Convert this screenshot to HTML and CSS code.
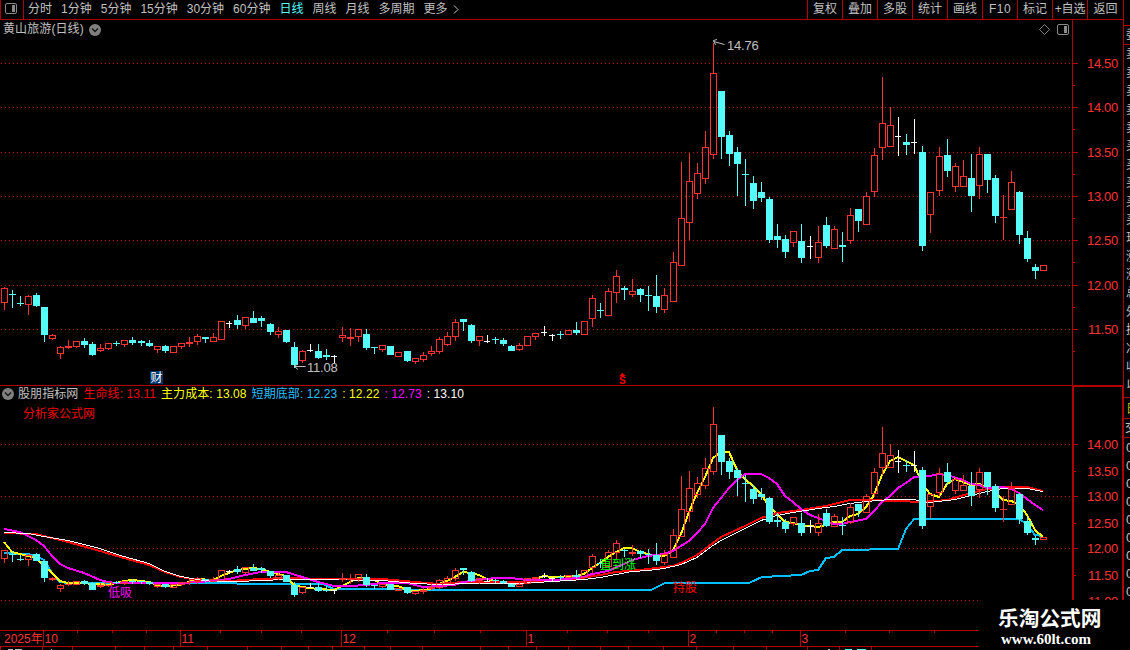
FILE: index.html
```html
<!DOCTYPE html>
<html lang="zh-CN">
<head>
    <meta charset="UTF-8">
    <title>黄山旅游(日线)</title>
    <link rel="stylesheet" href="styles.css">
</head>
<body>
    <div class="app">
        <div class="main">
            <div class="toolbar">
                <div class="layout-btn">
                    <svg width="12" height="11" viewBox="0 0 12 11"><rect x="0.5" y="0.5" width="11" height="10" rx="1.5" fill="none" stroke="#8a8a8a"/><rect x="7" y="2" width="3" height="7" fill="#8a8a8a"/></svg>
                </div>
                <div class="periods">
                    <span>分时</span><span>1分钟</span><span>5分钟</span><span>15分钟</span><span>30分钟</span><span>60分钟</span><span class="active">日线</span><span>周线</span><span>月线</span><span>多周期</span><span class="more">更多<svg width="6" height="9" viewBox="0 0 6 9"><path d="M1 0.5 L5 4.5 L1 8.5" fill="none" stroke="#c0c0c0"/></svg></span>
                </div>
                <div class="tools">
                    <span>复权</span><span>叠加</span><span>多股</span><span>统计</span><span>画线</span><span class="info">F10</span><span>标记</span><span class="add">+自选</span><span class="back">返回</span>
                </div>
            </div>

            <div class="panel price">
                <svg id="priceChart" width="1123" height="366" viewBox="0 20 1123 366"></svg>
                <div class="panel-title">
                    <span>黄山旅游(日线)</span>
                    <svg width="12" height="12" viewBox="0 0 12 12"><circle cx="6" cy="6" r="6" fill="#808080"/><path d="M3 4.5 L6 7.5 L9 4.5" fill="none" stroke="#111" stroke-width="1.3"/></svg>
                </div>
                <div class="panel-icons">
                    <svg width="11" height="11" viewBox="0 0 11 11"><path d="M5.5 0.5 L10.5 5.5 L5.5 10.5 L0.5 5.5 Z" fill="none" stroke="#808080"/></svg>
                    <svg width="12" height="11" viewBox="0 0 12 11"><rect x="0.5" y="0.5" width="11" height="10" rx="1.5" fill="none" stroke="#8a8a8a"/><rect x="7" y="2" width="3" height="7" fill="#8a8a8a"/></svg>
                </div>
            </div>

            <div class="panel indicator">
                <svg id="indChart" width="1123" height="244" viewBox="0 386 1123 244"></svg>
                <div class="ind-title">
                    <svg width="12" height="12" viewBox="0 0 12 12"><circle cx="6" cy="6" r="6" fill="#808080"/><path d="M3 4.5 L6 7.5 L9 4.5" fill="none" stroke="#111" stroke-width="1.3"/></svg>
                    <span class="name">股朋指标网</span>
                    <span class="red">生命线: 13.11</span>
                    <span class="yellow">主力成本: 13.08</span>
                    <span class="blue">短期底部: 12.23</span>
                    <span class="yellow">: 12.22</span>
                    <span class="magenta">: 12.73</span>
                    <span class="white">: 13.10</span>
                </div>
                <div class="ind-sub">分析家公式网</div>
            </div>

            <div class="timeline">
                <svg id="timeAxis" width="1123" height="20" viewBox="0 630 1123 20"></svg>
            </div>
        </div>

        <div class="side">
            <div class="side-quotes">
                <span>委</span><span>卖</span><span>卖</span><span>卖</span><span>卖</span><span>卖</span><span>买</span><span>买</span><span>买</span><span>买</span><span>买</span><span>现</span><span>涨</span><span>涨</span><span>总</span><span>外</span><span>换</span><span>净</span><span>收</span><span>以</span>
            </div>
            <div class="side-tab">日</div>
            <div class="side-head">交</div>
            <div class="side-times">
                <span>0</span><span>0</span><span>0</span><span>0</span><span>0</span><span>0</span><span>0</span><span>0</span><span>0</span>
            </div>
        </div>

        <div class="brand">
            <div class="brand-name">乐淘公式网</div>
            <div class="brand-url">www.60lt.com</div>
        </div>
    </div>
    <script src="chart.js"></script>
</body>
</html>
```
FILE: styles.css
```css
body {
    margin: 0;
    background: #000;
    color: #c0c0c0;
    font-family: "Liberation Sans", "Noto Sans CJK SC", sans-serif;
    font-size: 12px;
    overflow: hidden;
}
svg {
    display: block;
}
.app {
    position: relative;
    display: flex;
    width: 1130px;
    height: 650px;
    overflow: hidden;
}
.main {
    display: flex;
    flex-direction: column;
    width: 1123px;
    flex: none;
}

/* 顶部工具栏 */
.toolbar {
    box-sizing: border-box;
    display: flex;
    height: 20px;
    line-height: 19px;
    border-bottom: 1px solid #b00000;
    border-left: 1px solid #b00000;
    white-space: nowrap;
}
.layout-btn {
    width: 18px;
    padding: 3px 0 0 4px;
    border-right: 1px solid #b00000;
}
.periods {
    display: flex;
    flex: 1;
    gap: 9px;
    padding-left: 4px;
}
.periods .active {
    color: #54fcfc;
}
.more {
    display: flex;
    align-items: center;
    gap: 5px;
}
.tools {
    display: flex;
}
.tools span {
    box-sizing: border-box;
    width: 35px;
    border-left: 1px solid #b00000;
    text-align: center;
}
.tools .info {
    letter-spacing: 0.5px;
}
.tools .add {
    letter-spacing: -0.2px;
}
.tools .back {
    width: 36px;
}

/* K线与指标区 */
.panel {
    position: relative;
    flex: none;
}
.price {
    height: 366px;
}
.indicator {
    height: 244px;
}
.timeline {
    height: 20px;
}
.panel-title {
    position: absolute;
    left: 3px;
    top: 3px;
    display: flex;
    align-items: center;
    gap: 5px;
    line-height: 13px;
    letter-spacing: 0.1px;
}
.panel-icons {
    position: absolute;
    left: 1039px;
    top: 4px;
    display: flex;
    gap: 7px;
}
.ind-title {
    position: absolute;
    left: 2px;
    top: 1px;
    display: flex;
    align-items: center;
    gap: 5px;
    line-height: 14px;
    letter-spacing: 0.08px;
    white-space: nowrap;
}
.ind-title .name {
    margin-left: -1px;
}
.ind-sub {
    position: absolute;
    left: 23px;
    top: 21px;
    line-height: 14px;
    color: #f00000;
}
.red {
    color: #f00000;
}
.yellow {
    color: #ffff00;
}
.blue {
    color: #28c0ff;
}
.magenta {
    color: #ff00ff;
}
.white {
    color: #ffffff;
}

/* 图内文字 */
.axis-label {
    fill: #ff3232;
    font-size: 13px;
    letter-spacing: -0.3px;
}
.month-label {
    fill: #ff3232;
    font-size: 12px;
}
.mark {
    fill: #c0c0c0;
    font-size: 13px;
    letter-spacing: -0.2px;
}
.tag {
    font-size: 12px;
}

/* 右侧报价栏，只露出一条边 */
.side {
    box-sizing: border-box;
    width: 7px;
    height: 600px;
    padding-top: 25px;
    border-left: 1px solid #b00000;
    overflow: hidden;
    flex: none;
}
.side-quotes {
    display: flex;
    flex-direction: column;
    height: 371px;
    border-top: 1px solid #b00000;
}
.side-quotes span {
    height: 18.4px;
    line-height: 19px;
    padding-left: 2px;
}
.side-quotes span:first-child {
    border-bottom: 1px solid #b00000;
}
.side-tab {
    height: 20px;
    line-height: 22px;
    padding-left: 2px;
    border-top: 1px solid #b00000;
    color: #c0c000;
}
.side-head {
    height: 18px;
    line-height: 19px;
    padding-left: 1px;
    border-top: 1px solid #b00000;
}
.side-times {
    display: flex;
    flex-direction: column;
    border-top: 1px solid #b00000;
}
.side-times span {
    height: 18px;
    line-height: 19px;
    padding-left: 2px;
    font-size: 13px;
}

/* 右下角站点标识 */
.brand {
    position: absolute;
    right: 0;
    bottom: 0;
    box-sizing: border-box;
    width: 152px;
    height: 50px;
    padding: 8px 0 0 20px;
    background: #000;
    color: #fff;
    font-weight: bold;
    white-space: nowrap;
}
.brand-name {
    font-size: 20.7px;
    line-height: 22px;
}
.brand-url {
    padding-left: 3px;
    font-family: "Liberation Serif", serif;
    font-size: 15px;
    line-height: 18px;
}
```
FILE: chart.js
```javascript
// 每根K线: 类型 最高 实体上沿 实体下沿 最低 (主图像素坐标)
// r 阳线  d 阴线  w 十字星
const candles = `
r 287 288 303 310|d 290 294 295 308|d 296 303 304 306|r 295 296 305 315|d 293 295 306 307
d 307 307 335 342|r 334 335 339 340|r 346 347 354 359|r 340 346 348 349|r 341 341 347 348
d 338 341 345 348|d 342 344 355 356|r 344 348 351 352|r 343 343 349 350|d 341 343 344 346
r 340 340 345 347|d 337 340 343 345|d 340 341 343 346|d 340 343 346 347|r 346 346 350 353
d 345 346 351 353|r 346 346 353 353|r 343 343 347 349|r 337 342 344 347|r 334 336 342 345
d 337 337 339 343|r 333 337 342 342|r 321 321 340 340|w 321 323 324 328|d 315 320 325 329
r 317 317 326 329|d 311 318 323 323|d 316 318 321 327|d 323 324 332 335|r 327 331 335 338
d 330 330 342 343|d 342 347 365 368|r 350 351 361 363|w 344 350 351 352|d 344 351 358 359
d 349 355 357 360|w 355 356 357 363|r 327 335 338 342|r 328 337 339 346|r 329 329 337 342
d 329 334 348 350|d 347 347 348 354|r 345 345 350 352|d 346 346 355 355|r 352 352 357 357
d 351 351 361 362|r 358 358 362 364|r 352 355 360 362|r 346 351 354 356|r 337 339 352 354
r 332 336 345 346|r 319 322 337 341|d 319 319 322 331|d 324 325 341 343|r 336 336 341 346
w 335 341 342 343|d 337 339 340 344|d 338 340 344 346|d 345 346 351 351|r 343 345 350 351
r 336 336 346 346|r 333 333 337 340|w 326 332 333 336|w 334 335 336 341|d 331 334 335 339
r 330 330 335 335|d 322 330 333 335|r 321 321 335 335|r 295 298 319 327|d 303 310 311 318
r 288 291 316 316|r 270 276 293 303|d 286 288 290 300|r 279 291 295 297|d 288 289 295 302
d 286 295 296 311|d 275 296 307 313|r 288 295 310 313|r 252 262 302 302|r 162 218 266 266
r 153 181 223 240|r 163 173 194 199|r 131 147 179 184|r 43 73 155 159|d 91 91 137 159
d 131 135 154 166|d 147 152 164 196|d 159 174 175 206|d 176 183 201 209|d 182 192 198 202
d 197 199 240 243|d 224 236 240 248|d 235 239 252 258|r 231 231 243 247|d 224 241 258 263
w 236 246 247 259|r 226 242 258 263|d 217 225 246 248|r 226 229 249 249|d 232 245 247 262
r 208 215 241 244|d 209 209 221 232|r 192 196 225 225|r 148 155 192 197|r 77 123 148 160
r 107 125 147 147|w 117 136 137 156|d 134 142 145 155|w 119 142 143 154|d 146 152 246 251
r 192 192 215 233|r 147 156 191 196|d 139 155 171 177|r 163 166 187 192|r 160 176 187 187
d 154 178 196 212|r 147 154 186 199|d 154 154 180 193|d 175 178 216 223|r 195 217 218 240
r 171 182 210 210|d 191 192 235 244|d 231 238 259 262|d 264 267 271 279|r 265 265 271 271
`.trim().split(/[|\n]/).map(s => {
    const [type, ...v] = s.split(' ');
    return [type, ...v.map(Number)];
});

const colors = { r: '#ff3232', d: '#54fcfc', w: '#ffffff' };
const FRAME = '#b00000';

// 指标线
const lines = [
    { color: '#00c0ff', width: 2, points: '4,553 28,554 36,556 44,560 52,573 60,582 68,583 150,583 323,584 334,589 407,589 408,590 651,590 665,583 749,583 762,577 801,575 810,571 818,570 826,558 834,557 842,550 898,549 906,529 914,519 1019,519 1027,524 1035,535 1043,536' },
    { color: '#ffff00', width: 2, points: '4,542 12,552 20,554 28,556 36,558 44,566 52,573 60,581 68,583 84,583 92,584 100,584 108,585 116,583 124,581 133,580 149,582 157,585 165,586 181,585 189,582 197,579 213,580 221,576 229,573 237,570 253,568 261,569 270,572 278,574 286,576 294,585 302,587 318,589 334,590 342,586 350,582 358,578 366,578 374,580 382,584 398,586 407,590 415,591 423,590 431,589 439,584 447,581 455,577 463,572 471,573 479,575 487,579 495,581 503,582 511,583 519,584 527,581 535,579 544,576 552,577 560,577 568,576 576,576 584,574 592,568 600,563 608,557 616,552 624,548 632,548 640,552 648,554 656,556 664,556 673,550 681,534 689,512 697,493 705,477 713,458 721,452 729,452 737,470 745,479 753,486 761,494 769,506 777,514 785,522 793,523 801,525 818,527 826,525 834,522 842,522 850,516 858,514 866,507 874,495 882,475 890,461 898,457 906,461 914,465 922,483 930,494 939,497 947,484 955,479 963,482 971,485 979,484 987,487 995,491 1003,500 1011,501 1019,504 1027,515 1035,530 1043,537' },
    { color: '#ff0000', width: 2, points: '4,533 36,534 52,538 68,542 100,551 124,558 149,565 165,572 181,577 197,580 229,581 261,579 286,578 330,579 358,579 382,579 415,582 439,584 463,582 495,582 527,582 552,581 576,579 600,575 616,572 640,570 664,567 673,566 681,563 697,555 713,543 721,537 745,526 761,518 777,513 801,510 826,506 850,500 866,500 898,501 922,502 947,500 971,493 987,489 1011,487 1027,487 1043,491' },
    { color: '#ff00ff', width: 2, points: '4,529 20,532 28,536 36,540 44,546 52,556 60,564 68,568 84,573 100,580 108,582 116,583 181,583 213,581 229,579 245,575 261,572 286,572 302,577 318,582 334,586 350,586 366,585 382,583 407,583 423,587 439,586 455,585 463,582 479,580 495,578 511,578 527,580 552,580 568,579 584,577 592,574 608,571 624,564 632,560 648,556 664,554 673,551 681,546 689,541 697,533 705,524 713,508 721,498 729,488 737,480 745,474 761,474 769,478 777,484 785,496 793,502 801,509 810,515 818,518 826,521 834,524 842,524 850,522 866,519 874,511 882,502 890,496 898,488 906,483 914,477 930,476 939,474 947,475 963,480 971,484 979,485 987,488 1003,487 1011,489 1019,493 1027,499 1035,505 1043,510' },
    { color: '#ffffff', width: 1, points: '4,532 28,533 44,536 68,540 100,548 108,551 124,556 149,563 165,571 181,576 197,579 213,581 237,581 261,580 286,579 320,579 382,580 415,583 439,584 471,583 519,583 552,581 584,579 600,577 616,574 632,571 648,570 664,568 681,564 697,557 713,545 721,540 745,528 761,520 777,515 793,512 818,508 834,506 850,503 866,501 890,499 914,499 922,501 930,502 955,499 971,495 987,491 1003,488 1027,488 1043,491' }
];

const candleX = i => Math.floor(4.02 + i * 8.0602);
const same = y => y;
// 主图坐标换算到指标图
const toInd = y => Math.round(418.6 + (y - 63.5) * 0.5864);

function rect(x, y, w, h, color) {
    return `<rect x="${x}" y="${y}" width="${w}" height="${h}" fill="${color}"/>`;
}

function text(cls, x, y, str, attrs = '') {
    return `<text class="${cls}" x="${x}" y="${y}" ${attrs}>${str}</text>`;
}

function gridLine(y, end) {
    return `<line x1="1" y1="${y}.5" x2="${end}" y2="${y}.5" stroke="${FRAME}" stroke-dasharray="1 3"/>`;
}

function drawCandles(scale) {
    let out = '';
    candles.forEach(([type, h, t, b, l], i) => {
        const x = candleX(i);
        const color = colors[type];
        const high = scale(h), top = scale(t), low = scale(l);
        const bottom = Math.max(scale(b), top + 1);
        if (type === 'r' && bottom - top > 2) {
            out += rect(x, high, 1, top - high, color);
            out += rect(x, bottom, 1, Math.max(low - bottom, 0), color);
            // 空心实体用四条边拼出
            out += rect(x - 3, top, 7, 1, color) + rect(x - 3, bottom - 1, 7, 1, color);
            out += rect(x - 3, top, 1, bottom - top, color) + rect(x + 3, top, 1, bottom - top, color);
        } else {
            out += rect(x, high, 1, Math.max(low - high, 1), color);
            out += rect(x - 3, top, type === 'w' ? 6 : 7, bottom - top, color);
        }
    });
    return out;
}

function drawPrice() {
    const rows = [63, 107, 152, 196, 240, 285, 329];
    let out = '';
    rows.forEach((y, i) => {
        out += gridLine(y, 1072);
        out += rect(1073, y, 5, 1, FRAME) + rect(1073, y + 22, 2, 1, FRAME);
        out += text('axis-label', 1118, y + 5, (14.5 - i * 0.5).toFixed(2), 'text-anchor="end"');
    });
    out += rect(0, 385, 1073, 1, FRAME) + rect(1072, 20, 1, 366, FRAME);
    out += rect(1072, 385, 51, 1, FRAME);
    out += drawCandles(same);

    // 最高价、最低价标记
    out += '<path d="M724.5 44.5 L713.5 41.5 M717 39.5 L713.5 40.5 L715.5 45" fill="none" stroke="#c0c0c0"/>';
    out += text('mark', 727, 50, '14.76');
    out += '<path d="M305.5 366.5 L294.5 366.5 M298 363.5 L294.5 366.5 L298 369.5" fill="none" stroke="#c0c0c0"/>';
    out += text('mark', 307, 372, '11.08');

    out += rect(150, 371, 13, 13, '#003468');
    out += text('tag', 150.5, 382, '财', 'fill="#fff"');
    out += '<path d="M619.5 376 L622.5 373 L625.5 376 Z" fill="#f00000"/>';
    out += text('tag', 619, 384, 'S', 'fill="#f00000" style="font-size:10px;font-weight:bold"');
    document.getElementById('priceChart').innerHTML = out;
}

function drawIndicator() {
    let out = '';
    [444, 496, 548, 600].forEach(y => out += gridLine(y, 1072));
    [444, 471, 496, 523, 548, 575, 601].forEach((y, i) => {
        out += rect(1074, y, i % 2 ? 2 : 4, 1, FRAME);
        out += text('axis-label', 1118, y + 5, (14 - i * 0.5).toFixed(2), 'text-anchor="end"');
    });
    out += rect(1072, 386, 2, 214, FRAME) + rect(1122, 386, 1, 214, FRAME) + rect(1072, 386, 51, 1, FRAME);
    lines.forEach(l => {
        out += `<polyline points="${l.points}" fill="none" stroke="${l.color}" stroke-width="${l.width}" transform="translate(0 ${l.width === 1 ? 0.5 : 0})"/>`;
    });
    out += drawCandles(toInd);
    out += text('tag', 108, 597, '低吸', 'fill="#ff00ff"');
    out += text('tag', 600, 569, '直到涨', 'fill="#00ff00"');
    out += text('tag', 673, 592, '持股', 'fill="#ff0000"');
    document.getElementById('indChart').innerHTML = out;
}

function drawTimeAxis() {
    const months = [[43, '10'], [180, '11'], [341, '12'], [526, '1'], [688, '2'], [800, '3']];
    const weeks = [77, 112, 146, 220, 261, 301, 387, 434, 480, 567, 607, 648, 716, 744, 772, 845, 889, 934];
    const tabs = [0, 42, 72, 115, 144, 173, 207, 247, 281, 308, 332, 364, 390, 422, 480, 508, 536, 568, 600, 628, 663, 696, 733, 766, 807, 839, 871];
    let out = rect(0, 630, 1123, 1, FRAME) + rect(0, 646, 1123, 1, FRAME);
    out += text('month-label', 4, 643, '2025年');
    months.forEach(([x, label]) => {
        out += rect(x, 630, 1, 16, FRAME);
        out += text('month-label', x + 1.5, 643, label);
    });
    weeks.forEach(x => out += rect(x, 631, 1, 2, FRAME));
    tabs.forEach(x => out += rect(x, 647, 1, 3, FRAME));
    out += rect(8, 649, 5, 1, '#c0c0c0') + rect(15, 649, 7, 1, '#c0c0c0') + rect(51, 649, 1, 1, '#c0c0c0');
    out += rect(828, 649, 2, 1, '#c0c0c0') + rect(845, 649, 7, 1, '#54fcfc') + rect(857, 649, 9, 1, '#54fcfc');
    document.getElementById('timeAxis').innerHTML = out;
}

drawPrice();
drawIndicator();
drawTimeAxis();
document.querySelectorAll('rect, polyline, line').forEach(el => {
    if (!el.hasAttribute('rx')) el.setAttribute('shape-rendering', 'crispEdges');
});
```
